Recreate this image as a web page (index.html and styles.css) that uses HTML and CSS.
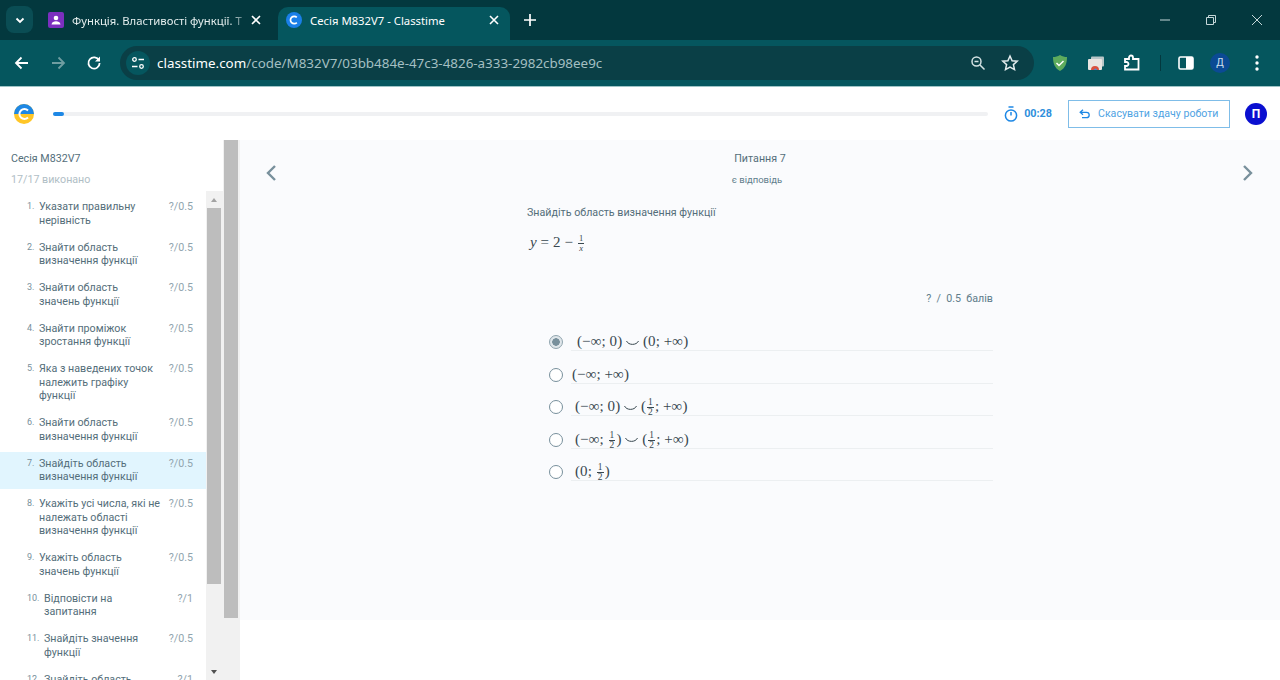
FILE: index.html
```html
<!DOCTYPE html>
<html lang="uk">

<head>
    <meta charset="UTF-8" />
    <meta name="viewport" content="width=device-width, initial-scale=1.0" />
    <title>Сесія M832V7 - Classtime</title>
    <link rel="stylesheet" href="styles.css">
</head>

<body>

    <!-- browser chrome -->
    <div class="tabstrip">
        <div class="tab-menu">
            <svg width="12" height="12" viewBox="0 0 12 12"><path d="M2.500 4.500 6 8l3.500-3.500" fill="none" stroke="#fff" stroke-width="1.800"/></svg>
        </div>
        <div class="tab">
            <svg class="favicon" width="16" height="16" viewBox="0 0 16 16"><rect width="16" height="16" rx="2" fill="#7b2fbf"/><circle cx="8" cy="6" r="2.300" fill="#fff"/><path d="M3.500 12.500c.5-2.600 2.300-3.200 4.500-3.200s4 .6 4.500 3.200z" fill="#fff"/></svg>
            <span class="tab-title faded">Функція. Властивості функції. Т</span>
            <svg class="tab-x" width="10" height="10" viewBox="0 0 10 10"><path d="M1 1l8 8M9 1l-8 8" stroke="#fff" stroke-width="1.600"/></svg>
        </div>
        <div class="tab active">
            <svg class="favicon" width="16" height="16" viewBox="0 0 16 16"><circle cx="8" cy="8" r="8" fill="#1a7fe8"/><path d="M10.800 5.400A3.700 3.700 0 1 0 10.800 10.600" fill="none" stroke="#fff" stroke-width="1.700"/></svg>
            <span class="tab-title">Сесія M832V7 - Classtime</span>
            <svg class="tab-x" width="10" height="10" viewBox="0 0 10 10"><path d="M1 1l8 8M9 1l-8 8" stroke="#fff" stroke-width="1.600"/></svg>
        </div>
        <svg class="new-tab" width="12" height="12" viewBox="0 0 12 12"><path d="M6 0v12M0 6h12" stroke="#fff" stroke-width="1.700"/></svg>
        <div class="window-btns">
            <svg width="12" height="12" viewBox="0 0 12 12"><path d="M1 6h10" stroke="#c5d6d8" stroke-width="1"/></svg>
            <svg width="12" height="12" viewBox="0 0 12 12"><path d="M1.500 3.500h7v7h-7zM3.500 3.500v-2h7v7h-2" fill="none" stroke="#c5d6d8" stroke-width="1"/></svg>
            <svg width="12" height="12" viewBox="0 0 12 12"><path d="M1 1l10 10M11 1 1 11" stroke="#c5d6d8" stroke-width="1"/></svg>
        </div>
    </div>

    <div class="toolbar">
        <svg class="tool" width="16" height="16" viewBox="0 0 16 16"><path d="M14 8H2.500M7.500 2.500 2 8l5.500 5.500" fill="none" stroke="#fff" stroke-width="1.800"/></svg>
        <svg class="tool" width="16" height="16" viewBox="0 0 16 16"><path d="M2 8h11.500M8.500 2.500 14 8l-5.500 5.500" fill="none" stroke="#6f9da1" stroke-width="1.800"/></svg>
        <svg class="tool" width="16" height="16" viewBox="0 0 16 16"><path d="M13 5.500A5.600 5.600 0 1 0 13.600 8" fill="none" stroke="#fff" stroke-width="1.800"/><path d="M14 1.500v5H9z" fill="#fff"/></svg>
        <div class="omnibox">
            <div class="site-icon">
                <svg width="14" height="14" viewBox="0 0 14 14"><circle cx="3.500" cy="3.500" r="1.800" fill="none" stroke="#fff" stroke-width="1.300"/><path d="M7.500 3.500H13M1 10.500h5.500" stroke="#fff" stroke-width="1.400"/><circle cx="10.500" cy="10.500" r="1.800" fill="none" stroke="#fff" stroke-width="1.300"/></svg>
            </div>
            <div class="url"><span class="host">classtime.com</span>/code/M832V7/03bb484e-47c3-4826-a333-2982cb98ee9c</div>
            <svg width="16" height="16" viewBox="0 0 16 16"><circle cx="6.500" cy="6.500" r="4.500" fill="none" stroke="#d5e3e4" stroke-width="1.500"/><path d="M4.500 6.500h4M10 10l4.500 4.500" stroke="#d5e3e4" stroke-width="1.500"/></svg>
            <svg class="star" width="18" height="18" viewBox="0 0 18 18"><path d="m9 2 2.100 4.700 5.100.5-3.800 3.400 1.100 5L9 13l-4.500 2.600 1.100-5-3.800-3.400 5.100-.5z" fill="none" stroke="#e3eced" stroke-width="1.500"/></svg>
        </div>
        <div class="extensions">
            <svg width="18" height="18" viewBox="0 0 18 18"><path d="M9 1c2.500 1.500 4.500 2 7 2 0 6-1.500 11-7 14C3.500 14 2 9 2 3c2.500 0 4.500-.5 7-2z" fill="#5dab5d"/><path d="m5.500 9 2.500 2.500 4.500-4.500" fill="none" stroke="#fff" stroke-width="1.500"/></svg>
            <svg width="16" height="14" viewBox="0 0 16 14"><rect x="3" y="0.500" width="13" height="10" rx="1" fill="#b9c6c8"/><rect x="0" y="3" width="14" height="11" rx="1" fill="#e9e5e2"/><path d="M3 14a4 4 0 0 1 8 0z" fill="#d9503f"/><path d="M6 14a1.500 1.500 0 0 1 3 0z" fill="#4a89dc"/></svg>
            <svg width="18" height="18" viewBox="0 0 18 18"><path d="M2 5h4V3.500a2 2 0 0 1 4 0V5h5.500v10.500H2v-3.500h1.500a2 2 0 0 0 0-4H2z" fill="none" stroke="#fff" stroke-width="1.800"/></svg>
            <span class="divider"></span>
            <svg class="panel" width="16" height="14" viewBox="0 0 16 14"><rect x="1" y="1" width="14" height="12" rx="1.500" fill="none" stroke="#fff" stroke-width="1.600"/><rect x="8" y="1" width="7" height="12" fill="#fff"/></svg>
            <span class="profile">Д</span>
            <svg class="dots" width="4" height="16" viewBox="0 0 4 16"><circle cx="2" cy="2" r="1.700" fill="#fff"/><circle cx="2" cy="8" r="1.700" fill="#fff"/><circle cx="2" cy="14" r="1.700" fill="#fff"/></svg>
        </div>
    </div>

    <!-- app header -->
    <header class="app-header">
        <svg class="logo" width="20" height="20" viewBox="0 0 20 20"><circle cx="10" cy="10" r="10" fill="#ffc627"/><path d="M0 10a10 10 0 0 1 20 0z" fill="#1e88e5"/><path d="M14 6.500A5 5 0 1 0 14 13.500" fill="none" stroke="#fff" stroke-width="2"/></svg>
        <div class="progress">
            <div class="progress-fill"></div>
        </div>
        <svg class="timer-icon" width="14" height="16" viewBox="0 0 14 16"><circle cx="7" cy="9.500" r="5.600" fill="none" stroke="#1e88e5" stroke-width="1.500"/><path d="M4.500 1h5M7 6v3.500" stroke="#1e88e5" stroke-width="1.500"/></svg>
        <span class="timer">00:28</span>
        <button class="cancel-btn">
            <svg width="12" height="10" viewBox="0 0 12 10"><path d="M4 .8 1.200 3.300 4 5.800M1.500 3.300h6a2.700 2.700 0 0 1 0 5.400H3" fill="none" stroke="#1e88e5" stroke-width="1.300"/></svg>
            Скасувати здачу роботи
        </button>
        <span class="avatar">П</span>
    </header>

    <div class="layout">
        <aside class="sidebar">
            <div class="session">
                <div class="session-name">Сесія M832V7</div>
                <div class="session-done">17/17 виконано</div>
            </div>
            <div class="list-wrap">
                <ol class="questions">
                    <li class="question"><span class="num">1.</span><span class="q-text">Указати правильну нерівність</span><span class="score">?/0.5</span></li>
                    <li class="question"><span class="num">2.</span><span class="q-text">Знайти область визначення функції</span><span class="score">?/0.5</span></li>
                    <li class="question"><span class="num">3.</span><span class="q-text">Знайти область значень&nbsp;функції</span><span class="score">?/0.5</span></li>
                    <li class="question"><span class="num">4.</span><span class="q-text">Знайти проміжок зростання функції</span><span class="score">?/0.5</span></li>
                    <li class="question"><span class="num">5.</span><span class="q-text">Яка з наведених точок належить графіку функції</span><span class="score">?/0.5</span></li>
                    <li class="question"><span class="num">6.</span><span class="q-text">Знайти область визначення функції</span><span class="score">?/0.5</span></li>
                    <li class="question current"><span class="num">7.</span><span class="q-text">Знайдіть область визначення функції</span><span class="score">?/0.5</span></li>
                    <li class="question"><span class="num">8.</span><span class="q-text">Укажіть усі числа, які не належать області визначення функції</span><span class="score">?/0.5</span></li>
                    <li class="question"><span class="num">9.</span><span class="q-text">Укажіть область значень функції</span><span class="score">?/0.5</span></li>
                    <li class="question wide"><span class="num">10.</span><span class="q-text">Відповісти на запитання</span><span class="score">?/1</span></li>
                    <li class="question wide"><span class="num">11.</span><span class="q-text">Знайдіть значення функції</span><span class="score">?/0.5</span></li>
                    <li class="question wide"><span class="num">12.</span><span class="q-text">Знайдіть область визначення</span><span class="score">?/1</span></li>
                </ol>
                <div class="inner-scroll">
                    <span class="arrow-up"></span>
                    <div class="inner-thumb"></div>
                    <span class="arrow-down"></span>
                </div>
            </div>
        </aside>

        <div class="outer-scroll">
            <div class="outer-thumb"></div>
        </div>

        <main class="content">
            <svg class="nav-arrow prev" width="12" height="18" viewBox="0 0 12 18"><path d="M10 2 3 9l7 7" fill="none" stroke="#78909c" stroke-width="2.400"/></svg>
            <section class="question-col">
                <div class="q-head">
                    <div class="q-title">Питання 7</div>
                    <div class="q-status">є відповідь</div>
                </div>
                <p class="q-body">Знайдіть область визначення функції</p>
                <div class="formula math"><i>y</i> = 2 − <span class="frac small"><span>1</span><span><i>x</i></span></span></div>
                <div class="points">?&nbsp; /&nbsp; 0.5&nbsp; балів</div>
                <ul class="answers">
                    <li class="answer"><span class="radio checked"></span><span class="math pad-a">(−∞; 0) <svg class="cup" width="13" height="6" viewBox="0 0 13 6"><path d="M.5 1c2 4.500 10 4.500 12 0" fill="none" stroke="#37474f"/></svg> (0; +∞)</span></li>
                    <li class="answer"><span class="radio"></span><span class="math pad-b">(−∞; +∞)</span></li>
                    <li class="answer"><span class="radio"></span><span class="math pad-c">(−∞; 0) <svg class="cup" width="13" height="6" viewBox="0 0 13 6"><path d="M.5 1c2 4.500 10 4.500 12 0" fill="none" stroke="#37474f"/></svg> (<span class="frac"><span>1</span><span>2</span></span>; +∞)</span></li>
                    <li class="answer"><span class="radio"></span><span class="math pad-c">(−∞; <span class="frac"><span>1</span><span>2</span></span>) <svg class="cup" width="13" height="6" viewBox="0 0 13 6"><path d="M.5 1c2 4.500 10 4.500 12 0" fill="none" stroke="#37474f"/></svg> (<span class="frac"><span>1</span><span>2</span></span>; +∞)</span></li>
                    <li class="answer"><span class="radio"></span><span class="math pad-c">(0; <span class="frac"><span>1</span><span>2</span></span>)</span></li>
                </ul>
            </section>
            <svg class="nav-arrow next" width="12" height="18" viewBox="0 0 12 18"><path d="M2 2l7 7-7 7" fill="none" stroke="#78909c" stroke-width="2.400"/></svg>
        </main>
    </div>

</body>

</html>
```

FILE: styles.css
```css
* {
    box-sizing: border-box;
    margin: 0;
    padding: 0;
}

html,
body {
    height: 680px;
    overflow: hidden;
}

body {
    display: flex;
    flex-direction: column;
    background: #fff;
    font-family: Roboto, sans-serif;
    color: #455a64;
}

/* browser chrome */
.tabstrip {
    display: flex;
    align-items: flex-end;
    height: 40px;
    flex-shrink: 0;
    background: #03383e;
    font-family: "Noto Sans", sans-serif;
    color: #fff;
}

.tab-menu {
    display: flex;
    align-items: center;
    justify-content: center;
    width: 27px;
    height: 27px;
    margin: 0 8px 7px 6px;
    border-radius: 8px;
    background: #0a4d54;
}

.tab {
    display: flex;
    align-items: center;
    width: 234px;
    height: 33px;
    padding: 0 14px 7px 7px;
    font-size: 11.300px;
}

.tab.active {
    width: 232px;
    margin-left: 3px;
    padding: 0 11px 7px 8px;
    border-radius: 10px 10px 0 0;
    background: #05565e;
}

.favicon {
    flex-shrink: 0;
    margin-right: 8px;
}

.tab-title {
    flex: 1;
    overflow: hidden;
    white-space: nowrap;
}

.tab-title.faded {
    -webkit-mask-image: linear-gradient(90deg, #000 88%, transparent);
    mask-image: linear-gradient(90deg, #000 88%, transparent);
    color: #e4eeee;
}

.new-tab {
    margin: 0 0 14px 14px;
}

.window-btns {
    display: flex;
    gap: 34px;
    margin: 0 17px 14px auto;
}

.toolbar {
    display: flex;
    align-items: center;
    height: 47px;
    flex-shrink: 0;
    padding: 0 21px 1px 14px;
    background: #05565e;
    border-bottom: 1px solid #9fc4c6;
}

.tool {
    margin-right: 20px;
}

.omnibox {
    display: flex;
    align-items: center;
    width: 914px;
    height: 34px;
    margin-left: -2px;
    padding: 0 15px 0 6px;
    border-radius: 17px;
    background: #0a3f46;
}

.site-icon {
    display: flex;
    align-items: center;
    justify-content: center;
    width: 24px;
    height: 24px;
    margin-right: 7px;
    border-radius: 50%;
    background: #05565e;
}

.url {
    flex: 1;
    font-family: "Noto Sans", sans-serif;
    font-size: 13.400px;
    white-space: nowrap;
    color: #a4bfc2;
}

.host {
    color: #fff;
}

.star {
    margin-left: 15px;
}

.extensions {
    display: flex;
    flex: 1;
    align-items: center;
    gap: 19px;
    padding-left: 17px;
}

.divider {
    width: 1px;
    height: 16px;
    background: #03383e;
}

.panel {
    margin-left: -2px;
}

.profile {
    display: flex;
    align-items: center;
    justify-content: center;
    width: 20px;
    height: 20px;
    margin-left: -3px;
    border-radius: 50%;
    background: #0b4a94;
    font-size: 10px;
    color: #cfe0ee;
}

.dots {
    margin-left: 6px;
}

/* app header */
.app-header {
    display: flex;
    align-items: center;
    height: 53px;
    flex-shrink: 0;
    padding: 0 13px 0 14px;
}

.logo {
    flex-shrink: 0;
}

.progress {
    flex: 1;
    height: 4px;
    margin: 0 16px 0 19px;
    border-radius: 2px;
    background: #f0f1f3;
}

.progress-fill {
    width: 11px;
    height: 100%;
    border-radius: 2px;
    background: #1e88e5;
}

.timer {
    margin: 0 16px 0 6px;
    font-size: 10.800px;
    font-weight: 700;
    color: #2f8fdc;
}

.cancel-btn {
    display: flex;
    align-items: center;
    gap: 7px;
    width: 162px;
    height: 28px;
    padding-left: 10px;
    border: 1px solid #7fbde8;
    background: #fff;
    font-family: Roboto, sans-serif;
    font-size: 10.600px;
    color: #4fa3e3;
}

.avatar {
    display: flex;
    align-items: center;
    justify-content: center;
    width: 22px;
    height: 22px;
    margin-left: 15px;
    border-radius: 50%;
    background: #0a0fd0;
    font-size: 12px;
    font-weight: 700;
    color: #fff;
}

/* sidebar */
.layout {
    display: flex;
    flex: 1;
    min-height: 0;
}

.sidebar {
    display: flex;
    flex-direction: column;
    width: 223px;
    flex-shrink: 0;
}

.session {
    height: 51px;
    padding: 12px 0 0 11px;
    font-size: 10.700px;
}

.session-name {
    color: #546e7a;
}

.session-done {
    margin-top: 8px;
    color: #b0bec5;
}

.list-wrap {
    display: flex;
    flex: 1;
    min-height: 0;
}

.questions {
    flex: 1;
    overflow: hidden;
    padding-top: 4px;
    list-style: none;
}

.question {
    display: flex;
    margin-bottom: 3.500px;
    padding: 5px 13px 5px 27px;
    font-size: 10.700px;
    line-height: 13.500px;
    color: #546e7a;
}

.question.current {
    background: #e1f5fe;
}

.num {
    width: 12px;
    flex-shrink: 0;
    font-size: 9px;
    color: #78909c;
}

.wide .num {
    width: 17px;
}

.q-text {
    flex: 1;
    margin-right: -2px;
}

.score {
    flex-shrink: 0;
    width: 33px;
    text-align: right;
    color: #90a4ae;
}

.inner-scroll {
    position: relative;
    width: 17px;
    flex-shrink: 0;
    background: #f1f1f1;
}

.inner-thumb {
    width: 14px;
    height: 376px;
    margin: 17px 0 0 1px;
    background: #bdbdbd;
}

.arrow-up,
.arrow-down {
    position: absolute;
    left: 5px;
    border-left: 3.500px solid transparent;
    border-right: 3.500px solid transparent;
}

.arrow-up {
    top: 7px;
    border-bottom: 4px solid #a3a3a3;
}

.arrow-down {
    bottom: 6px;
    border-top: 4px solid #505050;
}

.outer-scroll {
    width: 17px;
    flex-shrink: 0;
    padding-left: 1px;
    background: #f1f1f1;
}

.outer-thumb {
    width: 14px;
    height: 478px;
    background: #bdbdbd;
}

/* question area */
.content {
    display: grid;
    flex: 1;
    grid-template-columns: 1fr 466px 1fr;
    align-self: flex-start;
    height: 480px;
    background: #fafbfd;
}

.nav-arrow {
    margin-top: 24px;
}

.prev {
    margin-left: 25px;
}

.next {
    justify-self: end;
    margin-right: 26px;
}

.q-head {
    margin-top: 12px;
    text-align: center;
}

.q-title {
    font-size: 10.700px;
    color: #546e7a;
}

.q-status {
    margin-top: 9px;
    padding-right: 6px;
    font-size: 9.500px;
    color: #607d8b;
}

.q-body {
    margin-top: 21px;
    font-size: 10.700px;
    color: #546e7a;
}

.math {
    font-family: "Liberation Serif", serif;
    font-size: 15px;
    letter-spacing: 0.1px;
    white-space: nowrap;
    color: #37474f;
}

.formula {
    height: 22px;
    margin: 15px 0 0 3px;
}

.frac {
    display: inline-flex;
    flex-direction: column;
    align-items: center;
    margin: 0 1px;
    font-size: 9.500px;
    line-height: 9px;
    vertical-align: middle;
}

.frac span:first-child {
    border-bottom: 1px solid #37474f;
    padding: 0 1px;
}

.frac.small {
    font-size: 8.500px;
}

.points {
    margin-top: 36px;
    font-size: 10.700px;
    text-align: right;
    color: #607d8b;
}

.answers {
    margin-top: 13.500px;
    list-style: none;
}

.answer {
    display: flex;
    align-items: flex-end;
    height: 32.500px;
    margin-left: 22px;
}

.radio {
    width: 14px;
    height: 14px;
    margin-bottom: 2px;
    flex-shrink: 0;
    border: 1.500px solid #78909c;
    border-radius: 50%;
    background: #fff;
}

.radio.checked {
    border-color: #90a4ae;
    background: radial-gradient(circle, #78909c 0 3.500px, #dfe6ea 4px);
}

.answer .math {
    flex: 1;
    height: 19px;
    margin-left: 8px;
    line-height: 18px;
    border-bottom: 1px solid #eceff1;
}

.answer .pad-a {
    padding-left: 6px;
}

.answer .pad-b {
    padding-left: 1px;
}

.answer .pad-c {
    padding-left: 4px;
}

.cup {
    vertical-align: middle;
}
```
